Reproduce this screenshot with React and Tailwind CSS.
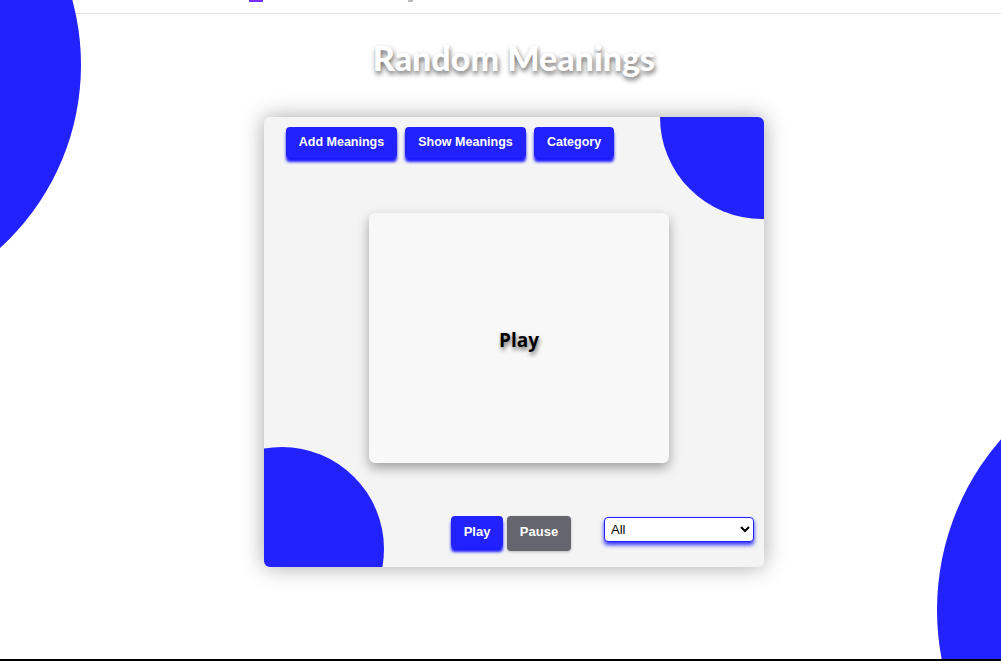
import React from "react";

export default function App() {
  return (
    <div className="relative w-[1001px] h-[661px] overflow-hidden bg-white border-b-2 border-black font-['Liberation_Sans',Arial,sans-serif]">
      {/* top cut-off header strip */}
      <div className="relative h-[14px] border-b border-[#e0e0e0]">
        <div className="absolute left-[249px] top-0 w-[14px] h-[2px] bg-[#7b2cff]" />
        <div className="absolute left-[408px] top-0 w-[5px] h-[2px] bg-[#bbbbbb]" />
      </div>

      {/* decorative background circles */}
      <div className="absolute left-[-413px] top-[-182px] w-[494px] h-[494px] rounded-full bg-[#2222ff]" />
      <div className="absolute left-[937px] top-[350px] w-[520px] h-[520px] rounded-full bg-[#2222ff]" />

      <div className="relative flex flex-col items-center pl-[27px]">
        <h1 className="mt-[22px] text-[34px] leading-[44px] font-black text-white font-['Lato',sans-serif] [text-shadow:1px_3px_5px_rgba(0,0,0,0.6)]">
          Random Meanings
        </h1>

        <div className="relative mt-[37px] w-[500px] h-[450px] rounded-md bg-[#f4f4f4] overflow-hidden shadow-[0_0_22px_rgba(0,0,0,0.35)] flex flex-col pt-[10px] px-[22px]">
          <div className="absolute left-[396px] top-[-102px] w-[204px] h-[204px] rounded-full bg-[#2222ff]" />
          <div className="absolute left-[-84px] top-[330px] w-[204px] h-[204px] rounded-full bg-[#2222ff]" />

          <div className="relative flex gap-[8px]">
            <button className="shrink-0 h-[31px] w-[111px] rounded-[4px] bg-[#2222ff] text-white text-[12.5px] font-bold shadow-[0_4px_3px_rgba(0,0,255,0.9)]">
              Add Meanings
            </button>
            <button className="shrink-0 h-[31px] w-[121px] rounded-[4px] bg-[#2222ff] text-white text-[12.5px] font-bold shadow-[0_4px_3px_rgba(0,0,255,0.9)]">
              Show Meanings
            </button>
            <button className="shrink-0 h-[31px] w-[80px] rounded-[4px] bg-[#2222ff] text-white text-[12.5px] font-bold shadow-[0_4px_3px_rgba(0,0,255,0.9)]">
              Category
            </button>
          </div>

          <div className="relative mt-[55px] ml-[83px] w-[300px] h-[250px] shrink-0 rounded-md bg-[#f8f8f8] shadow-[0_5px_12px_rgba(0,0,0,0.35)] flex items-center justify-center">
            <span className="mt-[4px] text-[19px] font-bold text-black font-['Open_Sans',sans-serif] [text-shadow:1px_3px_4px_rgba(0,0,0,0.55)]">
              Play
            </span>
          </div>

          <div className="relative mt-[53px] ml-[165px] flex items-start">
            <button className="shrink-0 h-[32px] w-[52px] rounded-[4px] bg-[#2222ff] text-white text-[13px] font-bold shadow-[0_4px_3px_rgba(0,0,255,0.9)]">
              Play
            </button>
            <button className="shrink-0 ml-[4px] h-[35px] w-[64px] pb-[4px] rounded-[4px] bg-[#65656d] text-white text-[13px] font-bold shadow-[0_1px_3px_rgba(0,0,0,0.25)]">
              Pause
            </button>
            <select className="shrink-0 ml-[33px] mt-[1px] h-[25px] w-[150px] rounded-[4px] border border-[#2222ff] bg-white text-[13px] text-black pl-[2px] shadow-[0_3px_4px_rgba(0,0,255,0.8)] font-['Liberation_Sans',Arial,sans-serif]">
              <option>All</option>
            </select>
          </div>
        </div>
      </div>
    </div>
  );
}
